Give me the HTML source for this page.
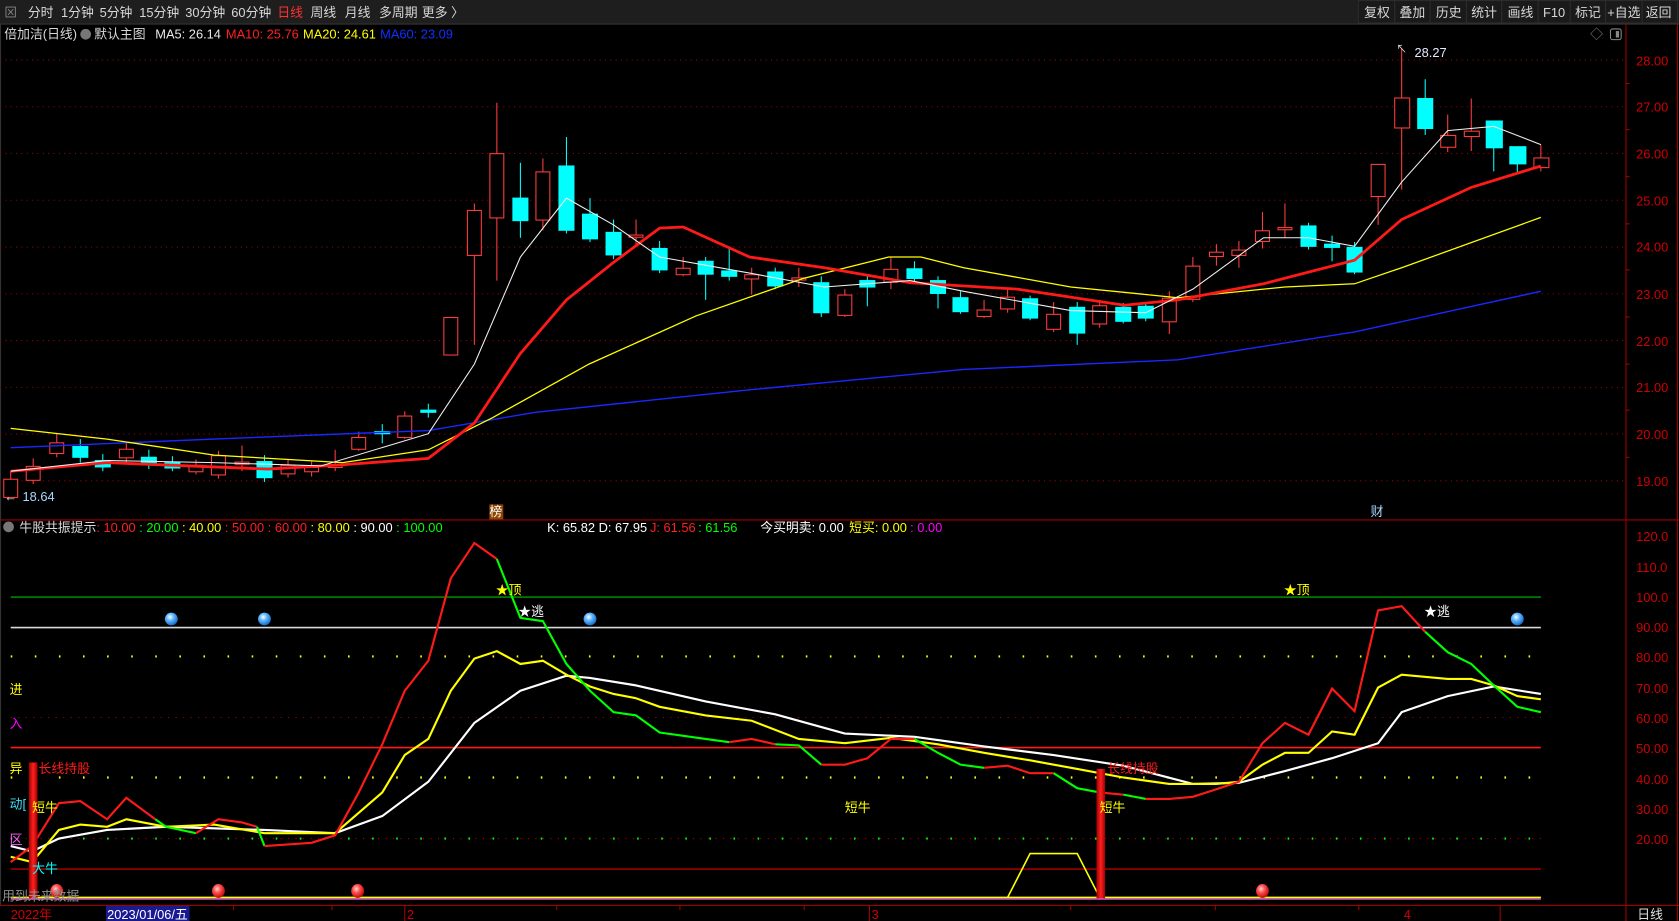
<!DOCTYPE html>
<html><head><meta charset="utf-8"><style>
html,body{margin:0;padding:0;background:#000;overflow:hidden}
svg{display:block}
text{font-family:"Liberation Sans","Noto Sans CJK SC",sans-serif;font-size:12px}
</style></head><body>
<svg width="1679" height="921" viewBox="0 0 1568 860" preserveAspectRatio="none" xmlns="http://www.w3.org/2000/svg">
<rect width="1568" height="860" fill="#000"/>
<rect x="0" y="0" width="1568" height="22" fill="#1e1e1e"/>
<line x1="0" y1="22.5" x2="1568" y2="22.5" stroke="#333"/>
<g fill="#d8d8d8">
<text x="4" y="16" fill="#888">⊠</text>
<text x="26" y="16">分时</text><text x="57" y="16">1分钟</text><text x="93" y="16">5分钟</text><text x="130" y="16">15分钟</text><text x="173" y="16">30分钟</text><text x="216" y="16">60分钟</text>
<text x="259" y="16" fill="#ff3030">日线</text><text x="290" y="16">周线</text><text x="322" y="16">月线</text><text x="354" y="16">多周期</text><text x="394" y="16">更多 〉</text>
</g>
<g fill="#1a1a1a" stroke="#2c2c2c">
<rect x="1268.5" y="0.5" width="34" height="21"/><rect x="1302.5" y="0.5" width="33" height="21"/><rect x="1335.5" y="0.5" width="34" height="21"/><rect x="1369.5" y="0.5" width="33" height="21"/><rect x="1402.5" y="0.5" width="34" height="21"/><rect x="1436.5" y="0.5" width="30" height="21"/><rect x="1466.5" y="0.5" width="33" height="21"/><rect x="1499.5" y="0.5" width="34" height="21"/><rect x="1533.5" y="0.5" width="33" height="21"/>
</g>
<g fill="#d8d8d8">
<text x="1274" y="16">复权</text><text x="1307" y="16">叠加</text><text x="1341" y="16">历史</text><text x="1374" y="16">统计</text><text x="1408" y="16">画线</text><text x="1441" y="16">F10</text><text x="1471" y="16">标记</text><text x="1501" y="16">+自选</text><text x="1537" y="16">返回</text>
</g>
<g>
<text x="4" y="36" fill="#d8d8d8">倍加洁(日线)</text>
<circle cx="80" cy="32" r="5" fill="#777"/>
<text x="88" y="36" fill="#d8d8d8">默认主图</text>
<text x="145" y="36" fill="#e8e8e8">MA5: 26.14</text>
<text x="211" y="36" fill="#ff2020">MA10: 25.76</text>
<text x="283" y="36" fill="#ffff00">MA20: 24.61</text>
<text x="355" y="36" fill="#1030ff">MA60: 23.09</text>
<text x="1485" y="36" fill="#888">◇</text>
<rect x="1504" y="27" width="10" height="10" fill="none" stroke="#888" rx="2"/><rect x="1509" y="29" width="3" height="6" fill="#888"/>
</g>
<line x1="1518.5" y1="22" x2="1518.5" y2="860" stroke="#a00000"/>
<line x1="1566.5" y1="22" x2="1566.5" y2="860" stroke="#a00000"/>
<line x1="0" y1="485.5" x2="1568" y2="485.5" stroke="#a00000"/>
<line x1="0" y1="845.5" x2="1568" y2="845.5" stroke="#a00000"/>
<line x1="0.5" y1="22" x2="0.5" y2="845" stroke="#333"/>
<g stroke="#9a0000" stroke-dasharray="1,4">
<line x1="0" y1="56" x2="1518" y2="56"/><line x1="0" y1="99.7" x2="1518" y2="99.7"/><line x1="0" y1="143.3" x2="1518" y2="143.3"/><line x1="0" y1="187" x2="1518" y2="187"/><line x1="0" y1="230.7" x2="1518" y2="230.7"/><line x1="0" y1="274.3" x2="1518" y2="274.3"/><line x1="0" y1="318" x2="1518" y2="318"/><line x1="0" y1="361.7" x2="1518" y2="361.7"/><line x1="0" y1="405.3" x2="1518" y2="405.3"/><line x1="0" y1="449" x2="1518" y2="449"/>
</g>
<g fill="#d00000" style="font-size:13px">
<text x="1528" y="61">28.00</text><text x="1528" y="104">27.00</text><text x="1528" y="148">26.00</text><text x="1528" y="192">25.00</text><text x="1528" y="235">24.00</text><text x="1528" y="279">23.00</text><text x="1528" y="323">22.00</text><text x="1528" y="366">21.00</text><text x="1528" y="410">20.00</text><text x="1528" y="454">19.00</text>
</g>
<g stroke="#a00000">
<line x1="1518" y1="78" x2="1522" y2="78"/><line x1="1518" y1="121" x2="1522" y2="121"/><line x1="1518" y1="165" x2="1522" y2="165"/><line x1="1518" y1="209" x2="1522" y2="209"/><line x1="1518" y1="252" x2="1522" y2="252"/><line x1="1518" y1="296" x2="1522" y2="296"/><line x1="1518" y1="340" x2="1522" y2="340"/><line x1="1518" y1="383" x2="1522" y2="383"/><line x1="1518" y1="427" x2="1522" y2="427"/>
</g>
<g stroke="#ff3c3c" fill="none" stroke-width="1">
<line x1="10" y1="440" x2="10" y2="465"/><rect x="3.5" y="447.5" width="13" height="17" fill="#000"/>
<line x1="31" y1="428" x2="31" y2="452"/><rect x="24.5" y="435.5" width="13" height="13" fill="#000"/>
<line x1="53" y1="405" x2="53" y2="427"/><rect x="46.5" y="413.5" width="13" height="10" fill="#000"/>
<line x1="118" y1="414" x2="118" y2="432"/><rect x="111.5" y="419.5" width="13" height="8" fill="#000"/>
<line x1="183" y1="429" x2="183" y2="443"/><rect x="176.5" y="434.5" width="13" height="6" fill="#000"/>
<line x1="204" y1="421" x2="204" y2="447"/><rect x="197.5" y="425.5" width="13" height="18" fill="#000"/>
<line x1="226" y1="416" x2="226" y2="440"/><rect x="219.5" y="431.5" width="13" height="2" fill="#000"/>
<line x1="269" y1="429" x2="269" y2="446"/><rect x="262.5" y="434.5" width="13" height="8" fill="#000"/>
<line x1="291" y1="431" x2="291" y2="445"/><rect x="284.5" y="436.5" width="13" height="4" fill="#000"/>
<line x1="313" y1="420" x2="313" y2="440"/><rect x="306.5" y="434.5" width="13" height="2" fill="#000"/>
<line x1="335" y1="403" x2="335" y2="421"/><rect x="328.5" y="408.5" width="13" height="11" fill="#000"/>
<line x1="378" y1="384" x2="378" y2="410"/><rect x="371.5" y="388.5" width="13" height="20" fill="#000"/>
<line x1="421" y1="296" x2="421" y2="331"/><rect x="414.5" y="296.5" width="13" height="35" fill="#000"/>
<line x1="443" y1="190" x2="443" y2="322"/><rect x="436.5" y="196.5" width="13" height="42" fill="#000"/>
<line x1="464" y1="96" x2="464" y2="262"/><rect x="457.5" y="143.5" width="13" height="60" fill="#000"/>
<line x1="507" y1="148" x2="507" y2="215"/><rect x="500.5" y="160.5" width="13" height="45" fill="#000"/>
<line x1="594" y1="205" x2="594" y2="230"/><rect x="587.5" y="219.5" width="13" height="2" fill="#000"/>
<line x1="638" y1="240" x2="638" y2="258"/><rect x="631.5" y="250.5" width="13" height="6" fill="#000"/>
<line x1="702" y1="250" x2="702" y2="275"/><rect x="695.5" y="256.5" width="13" height="4" fill="#000"/>
<line x1="746" y1="250" x2="746" y2="268"/><rect x="739.5" y="259.5" width="13" height="2" fill="#000"/>
<line x1="789" y1="270" x2="789" y2="296"/><rect x="782.5" y="275.5" width="13" height="19" fill="#000"/>
<line x1="832" y1="240" x2="832" y2="270"/><rect x="825.5" y="251.5" width="13" height="12" fill="#000"/>
<line x1="919" y1="280" x2="919" y2="297"/><rect x="912.5" y="289.5" width="13" height="6" fill="#000"/>
<line x1="941" y1="270" x2="941" y2="292"/><rect x="934.5" y="277.5" width="13" height="11" fill="#000"/>
<line x1="984" y1="282" x2="984" y2="310"/><rect x="977.5" y="293.5" width="13" height="14" fill="#000"/>
<line x1="1027" y1="280" x2="1027" y2="306"/><rect x="1020.5" y="285.5" width="13" height="17" fill="#000"/>
<line x1="1092" y1="272" x2="1092" y2="312"/><rect x="1085.5" y="278.5" width="13" height="22" fill="#000"/>
<line x1="1114" y1="240" x2="1114" y2="282"/><rect x="1107.5" y="248.5" width="13" height="31" fill="#000"/>
<line x1="1136" y1="228" x2="1136" y2="248"/><rect x="1129.5" y="235.5" width="13" height="4" fill="#000"/>
<line x1="1157" y1="225" x2="1157" y2="250"/><rect x="1150.5" y="233.5" width="13" height="5" fill="#000"/>
<line x1="1179" y1="198" x2="1179" y2="232"/><rect x="1172.5" y="215.5" width="13" height="10" fill="#000"/>
<line x1="1200" y1="190" x2="1200" y2="222"/><rect x="1193.5" y="212.5" width="13" height="2" fill="#000"/>
<line x1="1287" y1="153" x2="1287" y2="210"/><rect x="1280.5" y="153.5" width="13" height="30" fill="#000"/>
<line x1="1309" y1="45" x2="1309" y2="177"/><rect x="1302.5" y="91.5" width="14" height="28" fill="#000"/>
<line x1="1352" y1="107" x2="1352" y2="142"/><rect x="1345.5" y="126.5" width="14" height="11" fill="#000"/>
<line x1="1374" y1="92" x2="1374" y2="141"/><rect x="1367.5" y="122.5" width="14" height="5" fill="#000"/>
<line x1="1439" y1="135" x2="1439" y2="160"/><rect x="1432.5" y="147.5" width="14" height="9" fill="#000"/>
</g>
<g stroke="#00ffff" fill="#00ffff">
<line x1="75" y1="410" x2="75" y2="432"/><rect x="68" y="417" width="14" height="10"/>
<line x1="96" y1="424" x2="96" y2="440"/><rect x="89" y="430" width="14" height="6"/>
<line x1="139" y1="420" x2="139" y2="438"/><rect x="132" y="427" width="14" height="7"/>
<line x1="161" y1="426" x2="161" y2="440"/><rect x="154" y="432" width="14" height="5"/>
<line x1="247" y1="425" x2="247" y2="450"/><rect x="240" y="431" width="14" height="15"/>
<line x1="357" y1="396" x2="357" y2="414"/><rect x="350" y="403" width="14" height="2"/>
<line x1="400" y1="377" x2="400" y2="390"/><rect x="393" y="383" width="14" height="2"/>
<line x1="486" y1="152" x2="486" y2="222"/><rect x="479" y="185" width="14" height="21"/>
<line x1="529" y1="128" x2="529" y2="218"/><rect x="522" y="155" width="14" height="60"/>
<line x1="551" y1="185" x2="551" y2="226"/><rect x="544" y="200" width="14" height="23"/>
<line x1="573" y1="205" x2="573" y2="242"/><rect x="566" y="217" width="14" height="21"/>
<line x1="616" y1="225" x2="616" y2="255"/><rect x="609" y="232" width="14" height="20"/>
<line x1="659" y1="240" x2="659" y2="280"/><rect x="652" y="244" width="14" height="12"/>
<line x1="681" y1="230" x2="681" y2="262"/><rect x="674" y="253" width="14" height="5"/>
<line x1="724" y1="250" x2="724" y2="270"/><rect x="717" y="254" width="14" height="13"/>
<line x1="767" y1="258" x2="767" y2="296"/><rect x="760" y="264" width="14" height="28"/>
<line x1="810" y1="258" x2="810" y2="286"/><rect x="803" y="262" width="14" height="6"/>
<line x1="854" y1="244" x2="854" y2="264"/><rect x="847" y="251" width="14" height="9"/>
<line x1="876" y1="258" x2="876" y2="288"/><rect x="869" y="262" width="14" height="12"/>
<line x1="897" y1="272" x2="897" y2="293"/><rect x="890" y="278" width="14" height="13"/>
<line x1="962" y1="276" x2="962" y2="299"/><rect x="955" y="279" width="14" height="18"/>
<line x1="1006" y1="282" x2="1006" y2="322"/><rect x="999" y="287" width="14" height="24"/>
<line x1="1049" y1="283" x2="1049" y2="302"/><rect x="1042" y="287" width="14" height="13"/>
<line x1="1070" y1="283" x2="1070" y2="300"/><rect x="1063" y="286" width="14" height="11"/>
<line x1="1222" y1="208" x2="1222" y2="233"/><rect x="1215" y="211" width="14" height="19"/>
<line x1="1244" y1="220" x2="1244" y2="244"/><rect x="1237" y="228" width="14" height="3"/>
<line x1="1265" y1="226" x2="1265" y2="256"/><rect x="1258" y="231" width="14" height="23"/>
<line x1="1331" y1="74" x2="1331" y2="126"/><rect x="1324" y="92" width="14" height="28"/>
<line x1="1395" y1="113" x2="1395" y2="160"/><rect x="1388" y="113" width="15" height="25"/>
<line x1="1417" y1="137" x2="1417" y2="163"/><rect x="1410" y="137" width="15" height="16"/>
</g>
<polyline fill="none" stroke="#1a28ff" stroke-width="1.3" points="10,418 200,410 400,402 500,385 700,364 900,345 1100,336 1265,310 1439,272"/>
<polyline fill="none" stroke="#ffff00" stroke-width="1.2" points="10,400 100,410 200,425 320,432 400,420 460,390 550,340 650,295 750,260 830,240 860,240 900,250 1000,268 1100,278 1200,268 1265,265 1309,250 1439,203"/>
<polyline fill="none" stroke="#ff1a1a" stroke-width="2.6" points="10,440 100,432 250,438 320,434 400,428 443,395 486,330 529,280 573,245 616,213 638,212 700,240 770,250 850,264 950,270 1050,285 1100,280 1180,265 1265,243 1309,205 1374,175 1439,155"/>
<polyline fill="none" stroke="#f0f0f0" stroke-width="1" points="10,440 100,430 200,432 300,435 400,405 443,340 486,240 529,185 573,210 616,240 700,255 770,268 850,262 900,272 1000,290 1070,292 1114,270 1180,222 1222,222 1265,230 1309,170 1352,122 1395,118 1439,135"/>
<text x="4" y="468" fill="#e0e0e0">←</text><text x="21" y="468" fill="#a8d8ff">18.64</text>
<text x="1304" y="49" fill="#e0e0e0" style="font-size:10px">↖</text><text x="1321" y="53" fill="#e8e8ff">28.27</text>
<rect x="457" y="471" width="13" height="14" fill="#8b4500"/><text x="457" y="482" fill="#fff">榜</text>
<text x="1280" y="482" fill="#a8d8ff">财</text>
<circle cx="8" cy="492" r="5" fill="#777"/>
<text x="18" y="497" fill="#d8d8d8">牛股共振提示</text>
<text x="90" y="497" fill="#ff2020">: 10.00</text><text x="130" y="497" fill="#00ff00">: 20.00</text><text x="170" y="497" fill="#ffff00">: 40.00</text><text x="210" y="497" fill="#ff2020">: 50.00</text><text x="250" y="497" fill="#ff2020">: 60.00</text><text x="290" y="497" fill="#ffff00">: 80.00</text><text x="330" y="497" fill="#ffffff">: 90.00</text><text x="370" y="497" fill="#00ff00">: 100.00</text>
<text x="511" y="497" fill="#ffffff">K: 65.82</text><text x="559" y="497" fill="#ffffff">D: 67.95</text><text x="607" y="497" fill="#ff2020">J: 61.56</text><text x="652" y="497" fill="#00ff00">: 61.56</text>
<text x="710" y="497" fill="#ffffff">今买明卖: 0.00</text><text x="793" y="497" fill="#ffff00">短买: 0.00</text><text x="850" y="497" fill="#ff00ff">: 0.00</text>
<g fill="#d00000" style="font-size:13px">
<text x="1528" y="505">120.0</text><text x="1528" y="534">110.0</text><text x="1528" y="562">100.0</text><text x="1528" y="590">90.00</text><text x="1528" y="618">80.00</text><text x="1528" y="647">70.00</text><text x="1528" y="675">60.00</text><text x="1528" y="703">50.00</text><text x="1528" y="732">40.00</text><text x="1528" y="760">30.00</text><text x="1528" y="788">20.00</text>
</g>
<line x1="10" y1="557.5" x2="1439" y2="557.5" stroke="#00c000"/>
<line x1="10" y1="586" x2="1439" y2="586" stroke="#d8d8d8" stroke-width="1.5"/>
<line x1="10" y1="613" x2="1439" y2="613" stroke="#ffff00" stroke-width="2" stroke-dasharray="1.5,21"/>
<line x1="10" y1="670" x2="1439" y2="670" stroke="#b00000" stroke-dasharray="1,6"/>
<line x1="10" y1="698" x2="1439" y2="698" stroke="#ff1a1a" stroke-width="1.5"/>
<line x1="10" y1="726" x2="1439" y2="726" stroke="#ffff00" stroke-width="2" stroke-dasharray="1.5,21"/>
<line x1="10" y1="783" x2="1439" y2="783" stroke="#b00000" stroke-dasharray="1,6"/>
<line x1="10" y1="783" x2="1439" y2="783" stroke="#00ff00" stroke-width="2" stroke-dasharray="1.5,21"/>
<line x1="10" y1="811.5" x2="1439" y2="811.5" stroke="#e00000"/>
<line x1="10" y1="838" x2="1439" y2="838" stroke="#ffff00" stroke-width="1.5"/>
<line x1="10" y1="839.5" x2="1439" y2="839.5" stroke="#ff66ff" stroke-width="1"/>
<polyline fill="none" stroke="#ffff00" stroke-width="1.5" points="941,838 962,797 1006,797 1027,838"/>
<polyline fill="none" stroke="#ffffff" stroke-width="2" points="10,790 30,795 55,783 100,775 155,772 247,775 313,778 357,762 400,730 443,675 486,645 529,631 551,633 594,640 659,655 724,667 789,685 854,688 919,697 984,705 1049,715 1114,732 1157,731 1200,720 1244,708 1287,694 1309,665 1352,650 1395,641 1439,648"/>
<polyline fill="none" stroke="#ffff00" stroke-width="2" points="10,800 30,805 55,775 75,770 100,772 118,765 155,772 200,770 247,778 313,778 357,740 378,705 400,690 421,645 443,615 464,608 486,620 507,617 529,630 551,641 573,648 594,652 616,660 659,668 702,673 746,690 789,694 832,689 876,695 919,703 962,710 1006,718 1049,726 1092,732 1136,732 1157,730 1179,714 1200,703 1222,703 1244,683 1265,686 1287,642 1309,630 1352,634 1374,634 1395,640 1417,650 1439,653"/>
<g fill="none" stroke-width="2">
<polyline stroke="#ff1a1a" points="10,805 30,790 55,750 75,748 100,765 118,745 145,765"/>
<polyline stroke="#00ff00" points="145,765 155,772 183,778"/>
<polyline stroke="#ff1a1a" points="183,778 204,765 226,768 240,772"/>
<polyline stroke="#00ff00" points="240,772 247,790"/>
<polyline stroke="#ff1a1a" points="247,790 291,787 313,780 335,740 357,695 378,645 400,617 421,540 443,507 464,522"/>
<polyline stroke="#00ff00" points="464,522 486,577 507,580 529,620 551,645 573,665 594,668 616,684 659,690 681,693"/>
<polyline stroke="#ff1a1a" points="681,693 702,690 724,695"/>
<polyline stroke="#00ff00" points="724,695 746,696 767,714"/>
<polyline stroke="#ff1a1a" points="767,714 789,714 810,708 832,690 854,690"/>
<polyline stroke="#00ff00" points="854,690 876,703 897,714 919,717"/>
<polyline stroke="#ff1a1a" points="919,717 941,715 962,722 984,722"/>
<polyline stroke="#00ff00" points="984,722 1006,736 1027,740"/>
<polyline stroke="#ff1a1a" points="1027,740 1049,742"/>
<polyline stroke="#00ff00" points="1049,742 1070,746"/>
<polyline stroke="#ff1a1a" points="1070,746 1092,746 1114,744 1136,737 1157,730 1179,694 1200,675 1222,686 1244,643 1265,664 1287,570 1309,566 1331,590"/>
<polyline stroke="#00ff00" points="1331,590 1352,609 1374,620 1395,640 1417,660 1439,665"/>
</g>
<defs><linearGradient id="rb" x1="0" x2="1"><stop offset="0" stop-color="#a00000"/><stop offset="0.5" stop-color="#ff2020"/><stop offset="1" stop-color="#a00000"/></linearGradient>
<radialGradient id="bb" cx="0.4" cy="0.35" r="0.7"><stop offset="0" stop-color="#ffffff"/><stop offset="0.4" stop-color="#60b8ff"/><stop offset="1" stop-color="#1060c0"/></radialGradient>
<radialGradient id="rbb" cx="0.4" cy="0.35" r="0.7"><stop offset="0" stop-color="#ffd0d0"/><stop offset="0.4" stop-color="#ff5050"/><stop offset="1" stop-color="#b00000"/></radialGradient></defs>
<rect x="27" y="712" width="8" height="127" fill="url(#rb)"/>
<rect x="1024" y="718" width="8" height="121" fill="url(#rb)"/>
<circle cx="160" cy="578" r="6" fill="url(#bb)"/><circle cx="247" cy="578" r="6" fill="url(#bb)"/><circle cx="551" cy="578" r="6" fill="url(#bb)"/><circle cx="1417" cy="578" r="6" fill="url(#bb)"/>
<ellipse cx="53" cy="832" rx="6" ry="6.5" fill="url(#rbb)"/><ellipse cx="204" cy="832" rx="6" ry="6.5" fill="url(#rbb)"/><ellipse cx="334" cy="832" rx="6" ry="6.5" fill="url(#rbb)"/><ellipse cx="1179" cy="832" rx="6" ry="6.5" fill="url(#rbb)"/>
<text x="463" y="555" fill="#ffff00">★顶</text><text x="484" y="575" fill="#ffffff">★逃</text>
<text x="1199" y="555" fill="#ffff00">★顶</text><text x="1330" y="575" fill="#ffffff">★逃</text>
<text x="789" y="758" fill="#ffff00">短牛</text><text x="30" y="758" fill="#ffff00">短牛</text><text x="1027" y="758" fill="#ffff00">短牛</text>
<text x="36" y="722" fill="#ff1a1a">长线持股</text><text x="1034" y="722" fill="#ff1a1a">长线持股</text>
<text x="30" y="815" fill="#00ffff">大牛</text>
<text x="9" y="648" fill="#ffff00">进</text><text x="9" y="680" fill="#ff00ff">入</text><text x="9" y="722" fill="#ffff00">异</text><text x="9" y="755" fill="#40e0ff">动[</text><text x="9" y="788" fill="#ff60ff">区</text>
<text x="2" y="841" fill="#909090">用到未来数据</text>
<g stroke="#a00000"><line x1="218" y1="846" x2="218" y2="850"/><line x1="310" y1="846" x2="310" y2="850"/><line x1="378" y1="846" x2="378" y2="860"/><line x1="520" y1="846" x2="520" y2="850"/><line x1="635" y1="846" x2="635" y2="850"/><line x1="751" y1="846" x2="751" y2="850"/><line x1="812" y1="846" x2="812" y2="860"/><line x1="1000" y1="846" x2="1000" y2="850"/><line x1="1135" y1="846" x2="1135" y2="850"/><line x1="1269" y1="846" x2="1269" y2="850"/><line x1="1401" y1="846" x2="1401" y2="860"/></g>
<text x="10" y="858" fill="#d00000">2022年</text>
<rect x="99" y="846" width="78" height="14" fill="#1a1a90"/><text x="100" y="858" fill="#ffffff">2023/01/06/五</text>
<text x="380" y="858" fill="#d00000">2</text><text x="814" y="858" fill="#d00000">3</text><text x="1311" y="858" fill="#d00000">4</text>
<text x="1529" y="858" fill="#e0e0e0">日线</text>
</svg>
</body></html>
